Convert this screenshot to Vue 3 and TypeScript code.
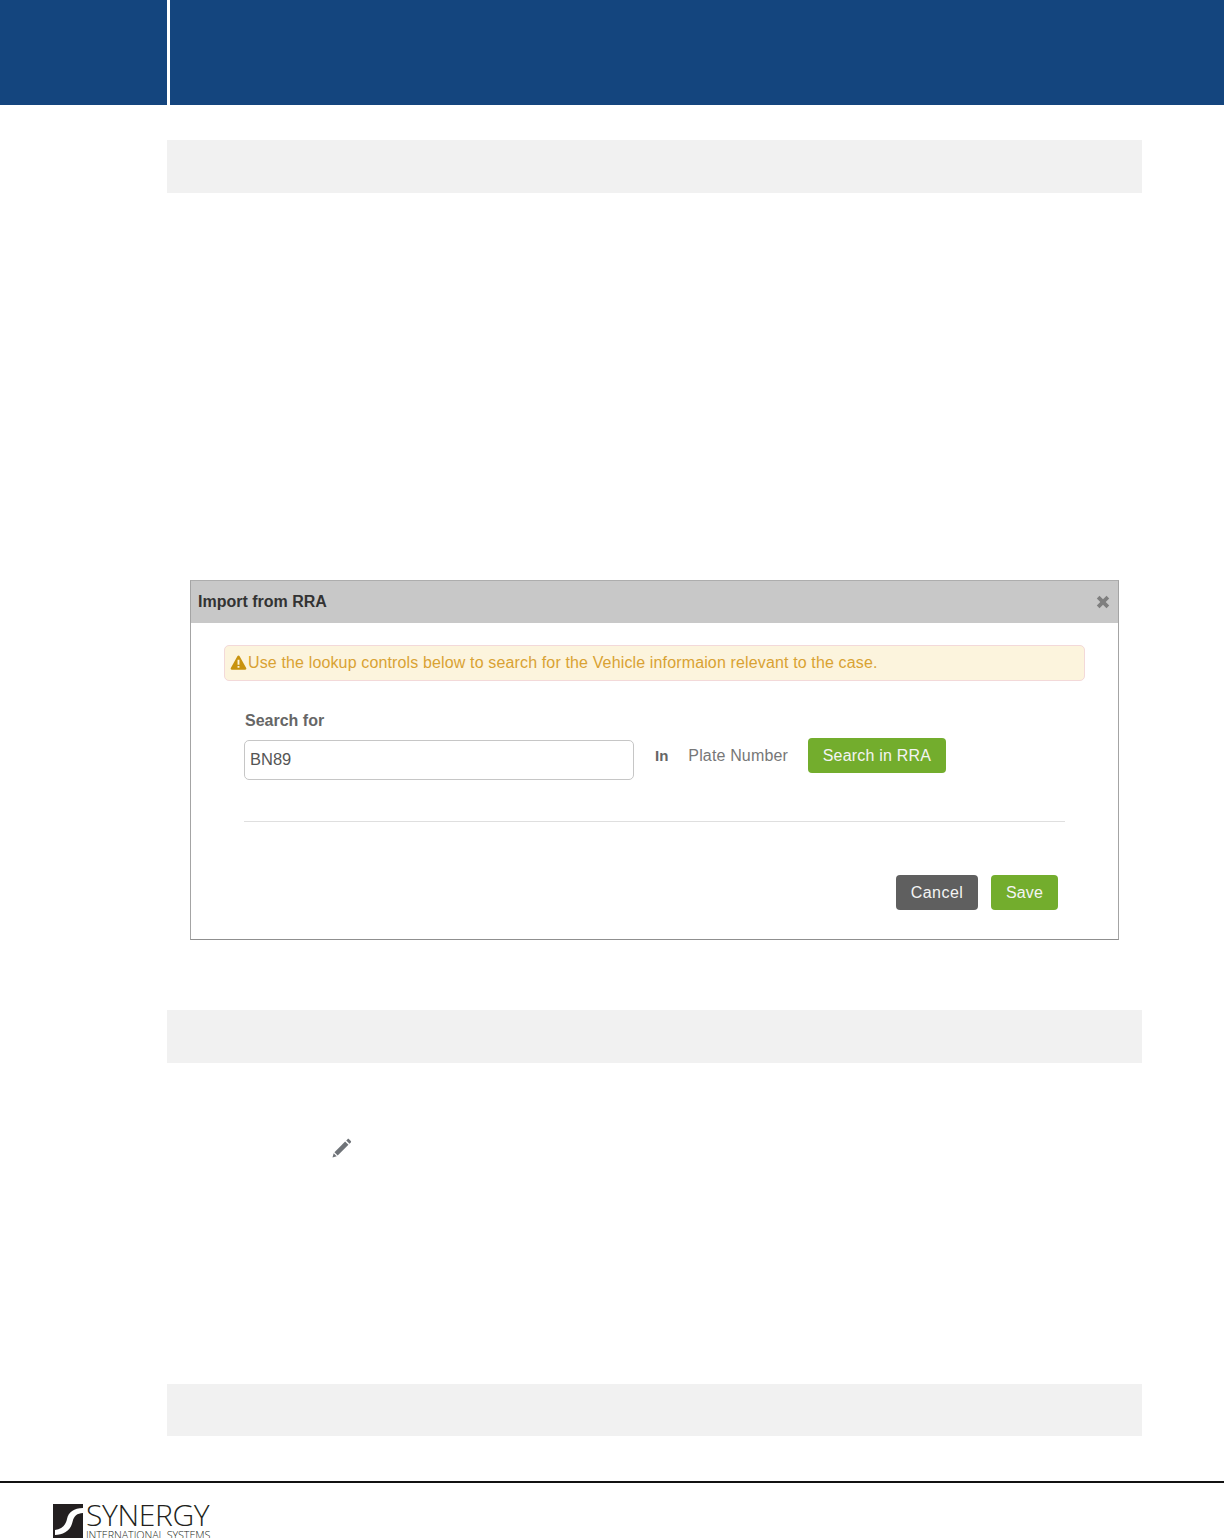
<script setup lang="ts">
const title = "Import from RRA";
</script>

<template>
  <div class="page">
    <header class="top">
      <div class="top-left"></div>
      <div class="top-right"></div>
    </header>

    <main class="content">
      <div class="strip first"></div>

      <section class="dialog">
        <div class="dialog-head">
          <span class="dialog-title">{{ title }}</span>
          <svg class="close" viewBox="0 0 14 14" width="14" height="14" aria-hidden="true">
            <path d="M3.500 .8 7 4.300 10.500 .8 13.200 3.500 9.700 7 13.200 10.500 10.500 13.200 7 9.700 3.500 13.200 .8 10.500 4.300 7 .8 3.500Z" fill="#7f7f7f" />
          </svg>
        </div>
        <div class="dialog-body">
          <div class="alert">
            <svg class="warn" viewBox="0 0 18 16" width="17" height="15" aria-hidden="true">
              <path d="M9 .5c.5 0 .9.3 1.200.8l7 12.600c.5.900-.1 1.800-1.100 1.800H1.900c-1 0-1.600-.9-1.100-1.800l7-12.600C8.100.8 8.500.5 9 .5Z" fill="#c8930f" />
              <path d="M8 5h2v5.500H8zM8 11.700h2v2H8z" fill="#fcf4dd" />
            </svg>
            <span>Use the lookup controls below to search for the Vehicle informaion relevant to the case.</span>
          </div>

          <div class="search">
            <div class="label">Search for</div>
            <div class="search-row">
              <div class="input">BN89</div>
              <span class="in">In</span>
              <span class="plate">Plate Number</span>
              <button class="btn green search-btn">Search in RRA</button>
            </div>
            <div class="rule"></div>
            <div class="actions">
              <button class="btn dark">Cancel</button>
              <button class="btn green save">Save</button>
            </div>
          </div>
        </div>
      </section>

      <div class="strip second"></div>

      <svg class="pencil" viewBox="0 0 22 22" width="24" height="24" aria-hidden="true">
        <path d="M14.800 4.200 17.800 7.200 8 17 5 14Z" fill="#6f7378" />
        <path d="M15.800 3.200 17 2c.4-.4 1-.4 1.400 0l1.600 1.600c.4.4.4 1 0 1.400l-1.200 1.200Z" fill="#6f7378" />
        <path d="M4.300 14.900 7.100 17.700 3.200 18.800Z" fill="#6f7378" />
      </svg>

      <div class="strip third"></div>
    </main>

    <footer class="foot">
      <div class="logo">
        <svg class="mark" viewBox="0 0 30 34" width="30" height="34" aria-hidden="true">
          <rect width="30" height="34" fill="#231f20" />
          <path d="M30 4C21 4 15.500 8 14 15C12.800 21 9 25 2 26V31C10 31 17.500 27 19.500 18C21 11.500 24 9.500 30 9Z" fill="#fff" />
        </svg>
        <div class="logo-text">
          <div class="logo-main">SYNERGY</div>
          <div class="logo-sub">INTERNATIONAL SYSTEMS</div>
        </div>
      </div>
    </footer>
  </div>
</template>

<style>
html, body { margin: 0; background: #fff; }
</style>

<style scoped>
.page {
  width: 1224px;
  height: 1538px;
  overflow: hidden;
  background: #fff;
  font-family: "Liberation Sans", Arial, sans-serif;
  display: flex;
  flex-direction: column;
}
.top { height: 105px; display: flex; gap: 3px; flex: none; }
.top-left { width: 167px; background: #14457e; }
.top-right { flex: 1; background: #14457e; }

.content { flex: 1; padding-left: 167px; display: flex; flex-direction: column; align-items: flex-start; }
.strip { width: 975px; background: #f1f1f1; flex: none; }
.first { height: 53px; margin-top: 35px; }
.second { height: 53px; margin-top: 70px; }
.third { height: 52px; margin-top: 223px; }

.dialog {
  width: 929px;
  height: 360px;
  box-sizing: border-box;
  margin: 387px 0 0 23px;
  border: 1px solid #a4a4a4;
  border-top-color: #adadad;
  border-bottom-color: #8f8f8f;
  background: #fff;
  display: flex;
  flex-direction: column;
  flex: none;
}
.dialog-head {
  height: 42px;
  box-sizing: border-box;
  flex: none;
  background: #c8c8c8;
  display: flex;
  align-items: center;
  justify-content: space-between;
  padding: 0 8px 0 7px;
}
.dialog-title { font-size: 16px; font-weight: 700; color: #333; }
.dialog-body { padding: 22px 33px 0; }
.alert {
  width: 861px;
  height: 36px;
  box-sizing: border-box;
  border: 1px solid #f3d9d9;
  border-radius: 5px;
  background: #fcf4dd;
  color: #d9a233;
  font-size: 16px;
  letter-spacing: 0.14px;
  display: flex;
  align-items: center;
  padding-left: 5px;
  white-space: nowrap;
}
.warn { flex: none; margin-right: 1px; margin-top: -2px; }

.search { padding-left: 20px; width: 821px; }
.label { margin: 31px 0 0 1px; font-size: 16px; line-height: 18px; font-weight: 700; color: #666; }
.search-row { display: flex; align-items: flex-start; margin-top: 10px; }
.input {
  width: 390px;
  height: 40px;
  box-sizing: border-box;
  border: 1px solid #c6c6c6;
  border-radius: 5px;
  font-size: 16.500px;
  line-height: 36px;
  padding-left: 5px;
  color: #555;
}
.in { margin: 6px 0 0 21px; font-size: 15px; line-height: 20px; font-weight: 700; color: #666; }
.plate { margin: 6px 0 0 20px; font-size: 16px; line-height: 20px; color: #777; letter-spacing: 0.15px; }
.btn {
  border: 0;
  border-radius: 4px;
  font-family: inherit;
  font-size: 16px;
  height: 35px;
  padding: 0;
  color: #f4f4f4;
  text-align: center;
  letter-spacing: 0.2px;
}
.green { background: #73ad2d; }
.dark { background: #5f5f5f; width: 82px; letter-spacing: 0.45px; }
.search-btn { width: 138px; margin: -2px 0 0 20px; }
.save { width: 67px; margin-left: 13px; letter-spacing: 0.1px; }
.rule { width: 821px; height: 1px; background: #dfdfdf; margin-top: 41px; }
.actions { display: flex; margin: 53px 0 0 652px; }

.pencil { margin: 74px 0 0 162px; flex: none; }

.foot { flex: none; height: 57px; border-top: 2px solid #111; box-sizing: border-box; padding-left: 53px; margin-top: auto; }
.logo { display: flex; margin-top: 21px; height: 34px; }
.mark { flex: none; }
.logo-text { margin-left: 3px; color: #231f20; font-family: "Open Sans", sans-serif; font-weight: 300; }
.logo-main { font-size: 30px; line-height: 24px; margin-top: -1px; letter-spacing: -0.35px; }
.logo-sub { font-size: 10.800px; line-height: 9px; margin-top: 3px; letter-spacing: -0.1px; white-space: nowrap; }
</style>
